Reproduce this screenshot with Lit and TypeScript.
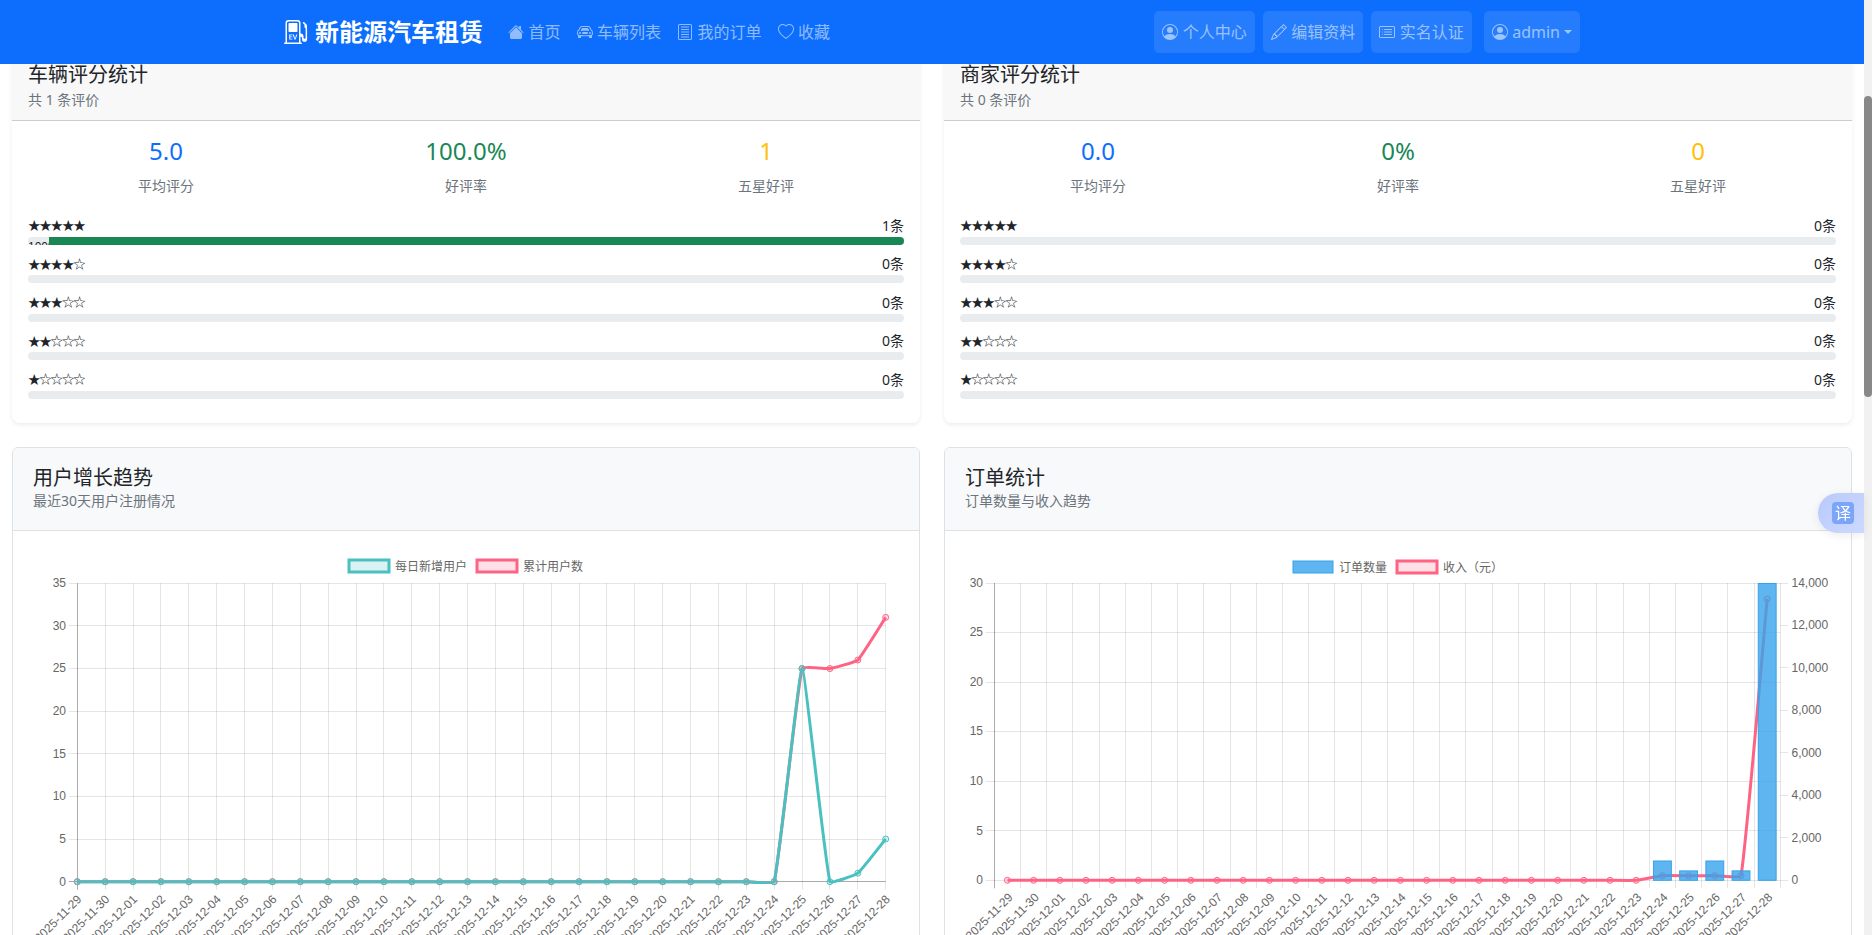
import { LitElement, html, css, svg } from "lit";
import { customElement } from "lit/decorators.js";

const DOC_TOP_SPACER = 289;
const SCROLL_TOP = 298;

const icons = {
  home: svg`<path d="M8.707 1.5a1 1 0 0 0-1.414 0L.646 8.146a.5.5 0 0 0 .708.708L8 2.207l6.646 6.647a.5.5 0 0 0 .708-.708L13 5.793V2.5a.5.5 0 0 0-.5-.5h-1a.5.5 0 0 0-.5.5v1.293L8.707 1.5Z"/><path d="m8 3.293 6 6V13.5a1.5 1.5 0 0 1-1.5 1.5h-9A1.5 1.5 0 0 1 2 13.5V9.293l6-6Z"/>`,
  car: svg`<path d="M4 9a1 1 0 1 1-2 0 1 1 0 0 1 2 0Zm10 0a1 1 0 1 1-2 0 1 1 0 0 1 2 0ZM6 8a1 1 0 0 0 0 2h4a1 1 0 1 0 0-2H6ZM4.862 4.276 3.906 6.19a.51.51 0 0 0 .497.731c.91-.073 2.35-.17 3.597-.17 1.247 0 2.688.097 3.597.17a.51.51 0 0 0 .497-.731l-.956-1.913A.5.5 0 0 0 10.691 4H5.309a.5.5 0 0 0-.447.276Z"/><path d="M2.52 3.515A2.5 2.5 0 0 1 4.82 2h6.362c1 0 1.904.596 2.298 1.515l.792 1.848c.075.175.21.319.38.404.5.25.855.715.965 1.262l.335 1.679c.033.161.049.325.049.49v.413c0 .814-.39 1.543-1 1.997V13.5a.5.5 0 0 1-.5.5h-2a.5.5 0 0 1-.5-.5v-1.338c-1.292.048-2.745.088-4 .088s-2.708-.04-4-.088V13.5a.5.5 0 0 1-.5.5h-2a.5.5 0 0 1-.5-.5v-1.892c-.61-.454-1-1.183-1-1.997v-.413a2.5 2.5 0 0 1 .049-.49l.335-1.68c.11-.546.465-1.012.964-1.261a.807.807 0 0 0 .381-.404l.792-1.848ZM4.82 3a1.5 1.5 0 0 0-1.379.91l-.792 1.847a1.8 1.8 0 0 1-.853.904.807.807 0 0 0-.43.564L1.03 8.904a1.5 1.5 0 0 0-.03.294v.413c0 .796.62 1.448 1.408 1.484 1.555.07 3.786.155 5.592.155 1.806 0 4.037-.084 5.592-.155A1.479 1.479 0 0 0 15 9.611v-.413c0-.099-.01-.197-.03-.294l-.335-1.68a.807.807 0 0 0-.43-.563 1.807 1.807 0 0 1-.853-.904l-.792-1.848A1.5 1.5 0 0 0 11.18 3H4.82Z"/>`,
  orders: svg`<path d="M2.5 0h11A1.5 1.5 0 0 1 15 1.5v13a1.5 1.5 0 0 1-1.5 1.5h-11A1.5 1.5 0 0 1 1 14.5v-13A1.5 1.5 0 0 1 2.5 0Zm0 1a.5.5 0 0 0-.5.5v13a.5.5 0 0 0 .5.5h11a.5.5 0 0 0 .5-.5v-13a.5.5 0 0 0-.5-.5h-11Z"/><path d="M4 3h8v1H4V3Zm0 2.5h8v1H4v-1ZM4 8h8v1H4V8Zm0 2.5h8v1H4v-1ZM4 13h8v1H4v-1Z" transform="translate(0 -.4)"/>`,
  heart: svg`<path d="m8 2.748-.717-.737C5.6.281 2.514.878 1.4 3.053c-.523 1.023-.641 2.5.314 4.385.92 1.815 2.834 3.989 6.286 6.357 3.452-2.368 5.365-4.542 6.286-6.357.955-1.886.838-3.362.314-4.385C13.486.878 10.4.28 8.717 2.01L8 2.748zM8 15C-7.333 4.868 3.279-3.04 7.824 1.143c.06.055.119.112.176.171a3.12 3.12 0 0 1 .176-.17C12.72-3.042 23.333 4.867 8 15z"/>`,
  person: svg`<path d="M11 6a3 3 0 1 1-6 0 3 3 0 0 1 6 0z"/><path fill-rule="evenodd" d="M0 8a8 8 0 1 1 16 0A8 8 0 0 1 0 8zm8-7a7 7 0 0 0-5.468 11.37C3.242 11.226 4.805 10 8 10s4.757 1.225 5.468 2.37A7 7 0 0 0 8 1z"/>`,
  pencil: svg`<path d="M12.146.146a.5.5 0 0 1 .708 0l3 3a.5.5 0 0 1 0 .708l-10 10a.5.5 0 0 1-.168.11l-5 2a.5.5 0 0 1-.65-.65l2-5a.5.5 0 0 1 .11-.168l10-10zM11.207 2.5 13.5 4.793 14.793 3.5 12.5 1.207 11.207 2.5zm1.586 3L10.5 3.207 4 9.707V10h.5a.5.5 0 0 1 .5.5v.5h.5a.5.5 0 0 1 .5.5v.5h.293l6.5-6.5zm-9.761 5.175-.106.106-1.528 3.821 3.821-1.528.106-.106A.5.5 0 0 1 5 12.5V12h-.5a.5.5 0 0 1-.5-.5V11h-.5a.5.5 0 0 1-.468-.325z"/>`,
  card: svg`<path d="M14.5 3a.5.5 0 0 1 .5.5v9a.5.5 0 0 1-.5.5h-13a.5.5 0 0 1-.5-.5v-9a.5.5 0 0 1 .5-.5h13zm-13-1A1.5 1.5 0 0 0 0 3.5v9A1.5 1.5 0 0 0 1.5 14h13a1.5 1.5 0 0 0 1.5-1.5v-9A1.5 1.5 0 0 0 14.5 2h-13z"/><path d="M5 8a.5.5 0 0 1 .5-.5h7a.5.5 0 0 1 0 1h-7A.5.5 0 0 1 5 8zm0-2.5a.5.5 0 0 1 .5-.5h7a.5.5 0 0 1 0 1h-7a.5.5 0 0 1-.5-.5zm0 5a.5.5 0 0 1 .5-.5h7a.5.5 0 0 1 0 1h-7a.5.5 0 0 1-.5-.5zm-1-5a.5.5 0 1 1-1 0 .5.5 0 0 1 1 0zM4 8a.5.5 0 1 1-1 0 .5.5 0 0 1 1 0zm0 2.5a.5.5 0 1 1-1 0 .5.5 0 0 1 1 0z"/>`,
  ev: svg`<path d="M3.5 2a.5.5 0 0 0-.5.5v5a.5.5 0 0 0 .5.5h5a.5.5 0 0 0 .5-.5v-5a.5.5 0 0 0-.5-.5h-5Zm2.131 10.46H4.14v-.893h1.403v-.505H4.14v-.855h1.49v-.54H3.485V13h2.146v-.54Zm1.316.54h.794l1.106-3.333h-.733l-.74 2.615h-.031l-.747-2.615h-.764L6.947 13Z"/><path d="M3 0a2 2 0 0 0-2 2v13H.5a.5.5 0 0 0 0 1h11a.5.5 0 0 0 0-1H11v-4a1 1 0 0 1 1 1v.8a1.7 1.7 0 0 0 3.4 0V7.4l-.1-3.9a.5.5 0 0 0-.15-.35L13.35 1.4a.5.5 0 0 0-.7.7l1 1v1.4a1 1 0 0 0 .75 1v6.3a.7.7 0 0 1-1.4 0v-.8a2 2 0 0 0-2-2V2a2 2 0 0 0-2-2H3Zm7 15H2V2a1 1 0 0 1 1-1h6a1 1 0 0 1 1 1v13Z"/>`,
};

const icon = (name: keyof typeof icons) =>
  html`<svg class="bi" viewBox="0 0 16 16" fill="currentColor" aria-hidden="true">${icons[name]}</svg>`;

const TEAL = "rgb(75,192,192)";
const TEAL_A = "rgba(75,192,192,0.2)";
const RED = "rgb(255,99,132)";
const RED_A = "rgba(255,99,132,0.2)";
const BLUE = "rgb(54,162,235)";
const BLUE_A = "rgba(54,162,235,0.8)";
const GRID = "rgba(0,0,0,0.1)";
const AXIS = "rgba(0,0,0,0.25)";

const dates: string[] = [];
for (let d = 29; d <= 30; d++) dates.push(`2025-11-${d}`);
for (let d = 1; d <= 28; d++) dates.push(`2025-12-${String(d).padStart(2, "0")}`);

const zeros = (n: number) => new Array(n).fill(0);
const newUsers = [...zeros(26), 25, 0, 1, 5];
const totalUsers = [...zeros(26), 25, 25, 26, 31];
const orderCounts = [...zeros(25), 2, 1, 2, 1, 33];
const revenue = [...zeros(25), 216, 216, 216, 216, 13247];

const px = (v: number) => Math.floor(v) + 0.5;

function spline(pts: [number, number][], t = 0.1) {
  const ctrl = pts.map((p, i) => {
    const a = pts[i - 1] ?? p;
    const b = pts[i + 1] ?? p;
    const d01 = Math.hypot(p[0] - a[0], p[1] - a[1]);
    const d12 = Math.hypot(b[0] - p[0], b[1] - p[1]);
    const sum = d01 + d12 || 1;
    const fa = (t * d01) / sum;
    const fb = (t * d12) / sum;
    return {
      prev: [p[0] - fa * (b[0] - a[0]), p[1] - fa * (b[1] - a[1])],
      next: [p[0] + fb * (b[0] - a[0]), p[1] + fb * (b[1] - a[1])],
    };
  });
  let d = `M${pts[0][0]} ${pts[0][1]}`;
  for (let i = 1; i < pts.length; i++) {
    const c1 = ctrl[i - 1].next;
    const c2 = ctrl[i].prev;
    d += `C${c1[0]} ${c1[1]} ${c2[0]} ${c2[1]} ${pts[i][0]} ${pts[i][1]}`;
  }
  return d;
}

function series(pts: [number, number][], color: string, fill: string) {
  return svg`<path d=${spline(pts)} fill="none" stroke=${color} stroke-width="3"/>
    ${pts.map((p) => svg`<circle cx=${p[0]} cy=${p[1]} r="3" fill=${fill} stroke=${color} stroke-width="1"/>`)}`;
}

function legendItem(x: number, y: number, stroke: string, fill: string, sw: number, label: string) {
  return svg`<rect x=${x} y=${y} width="40" height="12" fill=${fill} stroke=${stroke} stroke-width=${sw}/>
    <text class="lg" x=${x + 46} y=${y + 10.5}>${label}</text>`;
}

function xLabels(xs: number[], dx: number, base: number) {
  return dates.map(
    (d, i) => svg`<text class="tk" text-anchor="end" transform="translate(${xs[i] + dx} ${base}) rotate(-45)">${d}</text>`,
  );
}

function userChart() {
  const x0 = 77.3, x1 = 885.7, y0 = 881.7, yTop = 583.3;
  const step = (x1 - x0) / 29;
  const unit = (y0 - yTop) / 35;
  const xs = dates.map((_, i) => x0 + i * step);
  const yv = (v: number) => y0 - v * unit;
  const ticks = [0, 5, 10, 15, 20, 25, 30, 35];
  return html`<svg class="chart" viewBox="13 531 906 440" role="img">
    ${xs.map((x) => svg`<line x1=${px(x)} x2=${px(x)} y1=${yTop} y2=${y0 + 8} stroke=${GRID}/>`)}
    ${ticks.map((v) => svg`<line x1=${x0 - 8.5} x2=${x1} y1=${px(yv(v))} y2=${px(yv(v))} stroke=${GRID}/>`)}
    <line x1=${px(x0)} x2=${px(x0)} y1=${yTop} y2=${y0 + 8} stroke=${AXIS}/>
    <line x1=${x0 - 8.5} x2=${x1} y1=${px(y0)} y2=${px(y0)} stroke=${AXIS}/>
    ${ticks.map((v) => svg`<text class="tk" text-anchor="end" x="66" y=${yv(v) + 3.8}>${v}</text>`)}
    ${xLabels(xs, 5, 900)}
    ${legendItem(349, 560, TEAL, TEAL_A, 3, "每日新增用户")}
    ${legendItem(477, 560, RED, RED_A, 3, "累计用户数")}
    ${series(xs.map((x, i) => [x, yv(totalUsers[i])] as [number, number]), RED, RED_A)}
    ${series(xs.map((x, i) => [x, yv(newUsers[i])] as [number, number]), TEAL, TEAL_A)}
  </svg>`;
}

function orderChart() {
  const x0 = 994.3, x1 = 1780.3, y0 = 880.3, yTop = 583;
  const step = (x1 - x0) / 30;
  const unit = (y0 - yTop) / 30;
  const runit = (y0 - yTop) / 14000;
  const lines = Array.from({ length: 31 }, (_, i) => x0 + i * step);
  const xs = dates.map((_, i) => x0 + (i + 0.5) * step);
  const yv = (v: number) => y0 - v * unit;
  const yr = (v: number) => y0 - v * runit;
  const left = [0, 5, 10, 15, 20, 25, 30];
  const right = [0, 2000, 4000, 6000, 8000, 10000, 12000, 14000];
  const bw = step * 0.72;
  return html`<svg class="chart" viewBox="945 531 906 440" role="img">
    ${lines.map((x) => svg`<line x1=${px(x)} x2=${px(x)} y1=${yTop} y2=${y0 + 8} stroke=${GRID}/>`)}
    ${left.map((v) => svg`<line x1=${x0 - 8.5} x2=${x1} y1=${px(yv(v))} y2=${px(yv(v))} stroke=${GRID}/>`)}
    ${right.map((v) => svg`<line x1=${x1} x2=${x1 + 8} y1=${px(yr(v))} y2=${px(yr(v))} stroke=${GRID}/>`)}
    <line x1=${px(x0)} x2=${px(x0)} y1=${yTop} y2=${y0 + 8} stroke=${AXIS}/>
    ${left.map((v) => svg`<text class="tk" text-anchor="end" x="983" y=${yv(v) + 3.8}>${v}</text>`)}
    ${right.map((v) => svg`<text class="tk" x="1791.5" y=${yr(v) + 3.8}>${v.toLocaleString("en-US")}</text>`)}
    ${xLabels(xs, 6, 898)}
    ${legendItem(1293, 561, BLUE, BLUE_A, 1, "订单数量")}
    ${legendItem(1397, 561, RED, RED_A, 3, "收入（元）")}
    ${series(xs.map((x, i) => [x, yr(revenue[i])] as [number, number]), RED, RED_A)}
    ${xs.map((x, i) => {
      if (!orderCounts[i]) return null;
      const top = Math.max(yv(orderCounts[i]), yTop);
      return svg`<rect x=${x - bw / 2 + 0.5} y=${top + 0.5} width=${bw - 1} height=${y0 - top - 0.5} fill=${BLUE_A} stroke=${BLUE}/>`;
    })}
  </svg>`;
}

const stars = (n: number) => "★".repeat(n) + "☆".repeat(5 - n);

function ratingCard(title: string, count: number, avg: string, rate: string, five: string, dist: number[]) {
  return html`<section class="card rating">
    <header class="rating-head">
      <h5>${title}</h5>
      <small>共 ${count} 条评价</small>
    </header>
    <div class="rating-body">
      <div class="stats">
        <div><div class="val blue">${avg}</div><div class="lbl">平均评分</div></div>
        <div><div class="val green">${rate}</div><div class="lbl">好评率</div></div>
        <div><div class="val amber">${five}</div><div class="lbl">五星好评</div></div>
      </div>
      ${dist.map(
        (c, i) => html`<div class="dist">
          <div class="dist-line"><span class="stars">${stars(5 - i)}</span><span>${c}条</span></div>
          <div class="progress">
            ${c > 0 ? html`<span class="pct">100%</span><span class="fill"></span>` : null}
          </div>
        </div>`,
      )}
    </div>
  </section>`;
}

function chartCard(title: string, sub: string, chart: unknown) {
  return html`<section class="card chart-card">
    <header class="chart-head">
      <h5>${title}</h5>
      <small>${sub}</small>
    </header>
    ${chart}
  </section>`;
}

@customElement("app-root")
export class AppRoot extends LitElement {
  static styles = css`
    :host {
      display: flex;
      position: relative;
      height: 100vh;
      overflow: hidden;
      font-family: "Noto Sans", "Noto Sans CJK SC", sans-serif;
      color: #212529;
      background: #fff;
    }
    .scroller {
      flex: 1;
      min-width: 0;
      height: 100vh;
      overflow: hidden;
    }
    .scrollbar {
      flex: none;
      width: 8px;
      height: 100vh;
      background: #f1f1f1;
    }
    .thumb {
      margin-top: 96px;
      height: 301px;
      background: #888;
      border-radius: 4px;
    }
    .bi { width: 16px; height: 16px; flex: none; display: block; }
    nav {
      position: sticky;
      top: 0;
      z-index: 10;
      height: 64px;
      background: #0d6efd;
      display: flex;
      justify-content: center;
    }
    .nav-inner {
      width: 1296px;
      display: flex;
      align-items: center;
    }
    .brand {
      display: flex;
      align-items: center;
      gap: 7px;
      color: #fff;
      font-size: 24px;
      font-weight: 700;
      line-height: 36px;
      margin-right: 16px;
      width: 200px;
      white-space: nowrap;
    }
    .brand .bi { width: 24px; height: 24px; }
    .link, .btn {
      display: flex;
      align-items: center;
      gap: 4.5px;
      padding: 0 8px;
      font-size: 16px;
      line-height: 24px;
      color: rgba(255, 255, 255, 0.55);
      white-space: nowrap;
    }
    .links { display: flex; }
    .actions { margin-left: auto; display: flex; gap: 8px; }
    .btn {
      height: 42px;
      background: rgba(255, 255, 255, 0.1);
      border-radius: 5px;
    }
    .btn.user { margin-left: 4px; }
    .caret {
      margin-left: -0.5px;
      width: 0;
      height: 0;
      border-top: 4.8px solid currentColor;
      border-left: 4px solid transparent;
      border-right: 4px solid transparent;
    }
    .top-space { height: ${DOC_TOP_SPACER}px; }
    .grid {
      display: grid;
      grid-template-columns: 1fr 1fr;
      gap: 24px;
      padding: 0 12px;
    }
    .card { background: #fff; border-radius: 8px; overflow: hidden; }
    h5 { margin: 0; font-size: 20px; font-weight: 400; color: #212529; }
    small { display: block; font-size: 14px; color: #6c757d; }
    .rating { box-shadow: 0 2px 4px rgba(0, 0, 0, 0.075); }
    .rating-head {
      padding: 5px 16px 10.5px;
      background: #f8f8f8;
      border-bottom: 1px solid #cdcdcd;
    }
    .rating-head h5 { line-height: 30px; }
    .rating-head small { line-height: 21px; margin-top: -1.5px; }
    .rating-body { padding: 16px; }
    .stats {
      display: grid;
      grid-template-columns: repeat(3, 1fr);
      margin: 0 -12px 18px;
      text-align: center;
    }
    .val { font-size: 24px; line-height: 28.8px; margin-bottom: 9.7px; }
    .blue { color: #0d6efd; }
    .green { color: #198754; }
    .amber { color: #ffc107; }
    .lbl { font-size: 14px; line-height: 21px; color: #6c757d; }
    .dist { margin-bottom: 8px; }
    .dist-line {
      display: flex;
      justify-content: space-between;
      align-items: center;
      box-sizing: border-box;
      height: 22.5px;
      padding-bottom: 2px;
      font-size: 14px;
    }
    .stars {
      font-family: "Noto Sans CJK SC", sans-serif;
      font-size: 12.5px;
      letter-spacing: -1.2px;
    }
    .progress {
      display: flex;
      height: 8px;
      background: #e9ecef;
      border-radius: 4px;
      overflow: hidden;
    }
    .pct {
      flex: none;
      width: 21px;
      font-family: "Liberation Sans", sans-serif;
      font-size: 12px;
      line-height: 21px;
      overflow: hidden;
      white-space: nowrap;
    }
    .fill { flex: 1; background: #198754; }
    .chart-card { border: 1px solid #dee2e6; border-radius: 6px; }
    .chart-head {
      padding: 16px 20px 18px;
      background: #f8f9fa;
      border-bottom: 1px solid #dee2e6;
    }
    .chart-head h5 { line-height: 28px; }
    .chart-head small { line-height: 18px; margin-bottom: 2px; }
    .chart { display: block; width: 906px; height: 440px; }
    .tk, .lg {
      font-family: "Liberation Sans", "Noto Sans CJK SC", sans-serif;
      font-size: 12px;
      fill: #666;
    }
    .translate {
      position: absolute;
      right: 8px;
      top: 493px;
      width: 46px;
      height: 40px;
      box-sizing: border-box;
      padding: 9px 10px 9px 14px;
      border-radius: 20px 0 0 20px;
      background: linear-gradient(135deg, #b8c9fc, #cdd9ff);
      box-shadow: 0 2px 10px rgba(0, 0, 0, 0.08);
      z-index: 20;
    }
    .translate span {
      display: block;
      width: 22px;
      height: 22px;
      border-radius: 4px;
      background: #7ba5f8;
      color: #fff;
      font-size: 16px;
      line-height: 22px;
      text-align: center;
    }
  `;

  firstUpdated() {
    const scroller = this.renderRoot.querySelector(".scroller") as HTMLElement;
    scroller.scrollTop = SCROLL_TOP;
  }

  render() {
    return html`<div class="scroller">
        <nav>
          <div class="nav-inner">
            <div class="brand">${icon("ev")}<span>新能源汽车租赁</span></div>
            <div class="links">
              <div class="link">${icon("home")}<span>首页</span></div>
              <div class="link">${icon("car")}<span>车辆列表</span></div>
              <div class="link">${icon("orders")}<span>我的订单</span></div>
              <div class="link">${icon("heart")}<span>收藏</span></div>
            </div>
            <div class="actions">
              <div class="btn">${icon("person")}<span>个人中心</span></div>
              <div class="btn">${icon("pencil")}<span>编辑资料</span></div>
              <div class="btn">${icon("card")}<span>实名认证</span></div>
              <div class="btn user">${icon("person")}<span>admin</span><i class="caret"></i></div>
            </div>
          </div>
        </nav>
        <div class="top-space"></div>
        <main class="grid">
          ${ratingCard("车辆评分统计", 1, "5.0", "100.0%", "1", [1, 0, 0, 0, 0])}
          ${ratingCard("商家评分统计", 0, "0.0", "0%", "0", [0, 0, 0, 0, 0])}
          ${chartCard("用户增长趋势", "最近30天用户注册情况", userChart())}
          ${chartCard("订单统计", "订单数量与收入趋势", orderChart())}
        </main>
      </div>
      <div class="scrollbar"><div class="thumb"></div></div>
      <div class="translate"><span>译</span></div>`;
  }
}
